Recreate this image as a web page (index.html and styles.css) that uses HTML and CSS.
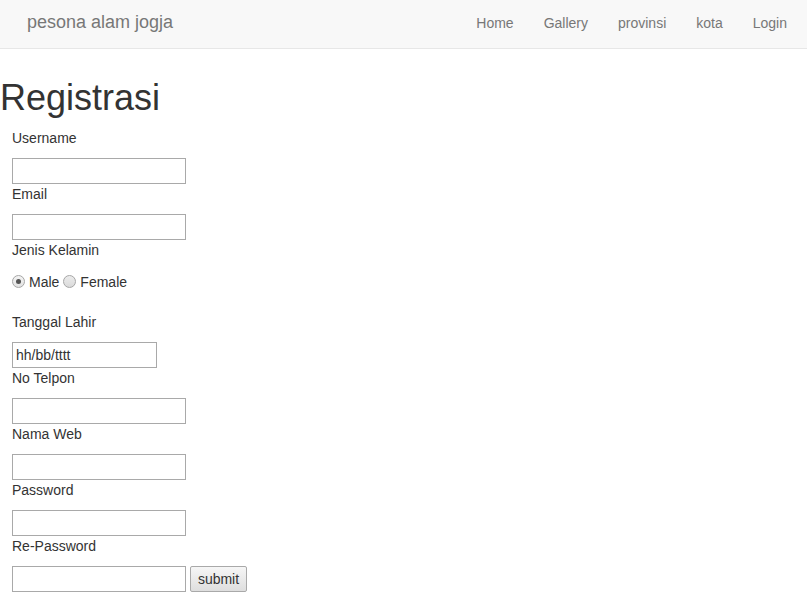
FILE: index.html
```html
<!DOCTYPE html>
<html>
<head>
<meta charset="utf-8">
<link rel="stylesheet" href="styles.css">
</head>
<body>
<nav class="navbar">
  <a class="brand" href="#">pesona alam jogja</a>
  <ul class="nav">
    <li><a href="#">Home</a></li>
    <li><a href="#">Gallery</a></li>
    <li><a href="#">provinsi</a></li>
    <li><a href="#">kota</a></li>
    <li><a href="#">Login</a></li>
  </ul>
</nav>
<h1 class="title">Registrasi</h1>
<form class="form">
  <label class="lbl">Username</label>
  <input class="field" type="text">
  <label class="lbl">Email</label>
  <input class="field" type="text">
  <label class="lbl">Jenis Kelamin</label>
  <div class="radios">
    <span class="radio checked"></span><span class="rtext">Male</span>
    <span class="radio"></span><span class="rtext">Female</span>
  </div>
  <label class="lbl">Tanggal Lahir</label>
  <input class="field date" type="text" value="hh/bb/tttt">
  <label class="lbl">No Telpon</label>
  <input class="field" type="text">
  <label class="lbl">Nama Web</label>
  <input class="field" type="text">
  <label class="lbl">Password</label>
  <input class="field" type="password">
  <label class="lbl">Re-Password</label>
  <div class="last">
    <input class="field" type="password">
    <button class="btn" type="button">submit</button>
  </div>
</form>
</body>
</html>
```
FILE: styles.css
```css
html, body {
  margin: 0;
  padding: 0;
  background: #fff;
  font-family: "Liberation Sans", Arial, sans-serif;
  font-size: 14px;
  color: #333;
}
.navbar {
  display: flex;
  align-items: center;
  justify-content: space-between;
  height: 48px;
  background: #f8f8f8;
  border-bottom: 1px solid #e7e7e7;
  padding: 0 5px 0 27px;
}
.brand {
  font-size: 18px;
  color: #777;
  text-decoration: none;
  line-height: 20px;
  position: relative;
  top: -2px;
}
.nav {
  display: flex;
  list-style: none;
  margin: 0;
  padding: 0;
}
.nav a {
  display: block;
  padding: 0 15px;
  color: #777;
  text-decoration: none;
  line-height: 20px;
  position: relative;
  top: -1px;
}
.title {
  font-size: 36px;
  font-weight: 500;
  line-height: 1.1;
  margin: 29px 0 10px 0;
  color: #333;
}
.form {
  display: flex;
  flex-direction: column;
  align-items: flex-start;
  padding-left: 12px;
}
.lbl {
  line-height: 20px;
  height: 20px;
  margin-bottom: 10px;
}
.field {
  box-sizing: border-box;
  width: 174px;
  height: 26px;
  margin: 0;
  border: 1px solid #a9a9a9;
  padding: 2px 3px;
  font-family: "Liberation Sans", Arial, sans-serif;
  font-size: 14px;
  color: #333;
  background: #fff;
  border-radius: 0;
  outline: none;
}
.field.date {
  width: 145px;
}
.radios {
  display: flex;
  align-items: center;
  height: 22px;
  margin: 1px 0 19px 0;
}
.radio {
  box-sizing: border-box;
  width: 13px;
  height: 13px;
  border-radius: 50%;
  border: 1px solid #a6a6a6;
  background: linear-gradient(#ececec, #dadada);
  position: relative;
  margin-right: 4px;
}
.radio.checked {
  background: linear-gradient(#f4f4f4, #e2e2e2);
}
.radio.checked::after {
  content: "";
  position: absolute;
  left: 3px;
  top: 3px;
  width: 5px;
  height: 5px;
  border-radius: 50%;
  background: #555;
}
.rtext {
  margin-right: 4px;
  line-height: 20px;
}
.last {
  display: flex;
  gap: 4px;
}
.btn {
  box-sizing: border-box;
  height: 26px;
  width: 57px;
  margin: 0;
  padding: 0;
  border: 1px solid #a9a9a9;
  border-radius: 2px;
  background: linear-gradient(#f6f6f6, #dedede);
  font-family: "Liberation Sans", Arial, sans-serif;
  font-size: 14px;
  color: #333;
}
```
